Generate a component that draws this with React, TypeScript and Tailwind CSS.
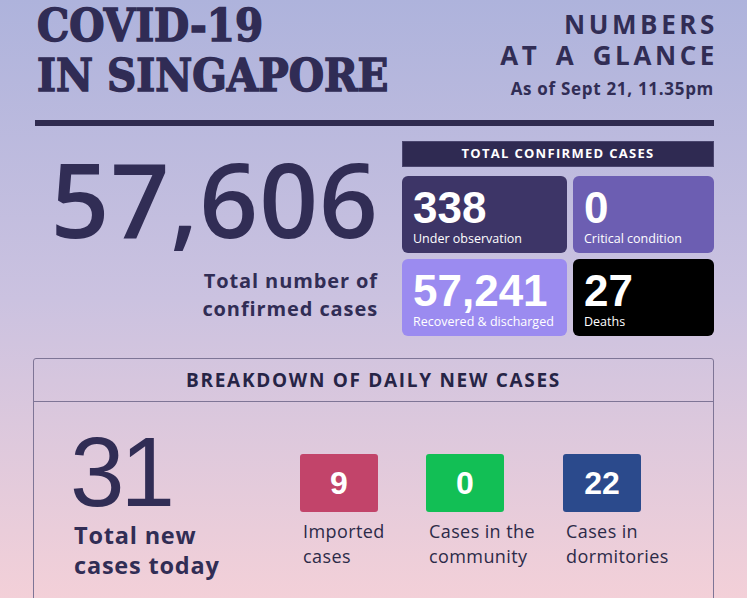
const sans = "font-['Open_Sans','Liberation_Sans',sans-serif]";
const arial = "font-['Liberation_Sans',Arial,sans-serif]";

type Stat = { value: string; label: string; bg: string };

const totals: Stat[] = [
  { value: "338", label: "Under observation", bg: "bg-[#3d3567]" },
  { value: "0", label: "Critical condition", bg: "bg-[#6c5eb2]" },
  { value: "57,241", label: "Recovered & discharged", bg: "bg-[#9b8bf0]" },
  { value: "27", label: "Deaths", bg: "bg-black" },
];

const daily = [
  { value: "9", lines: ["Imported", "cases"], bg: "bg-[#c2446a]", w: "w-[126px]" },
  { value: "0", lines: ["Cases in the", "community"], bg: "bg-[#12bf55]", w: "w-[137px]" },
  { value: "22", lines: ["Cases in", "dormitories"], bg: "bg-[#2b4a8c]", w: "w-[130px]" },
];

export default function App() {
  return (
    <div className="w-[747px] h-[598px] overflow-hidden bg-gradient-to-b from-[#aeb3dc] via-[#cbc2e0] to-[#f3d0d8] pl-[35px] pr-[33px] text-[#312d55]">
      {/* header */}
      <div className="flex justify-between items-start">
        <h1 className="font-['DejaVu_Serif_Condensed','DejaVu_Serif',serif] font-bold text-[45px] leading-[50px] pt-[1px] pl-[2px] text-[#302c55] [-webkit-text-stroke:1.4px_#302c55]">
          COVID-19
          <br />
          IN SINGAPORE
        </h1>
        <div className={`${sans} text-right font-bold pt-[9px]`}>
          <p className="text-[26px] leading-[31px] tracking-[3.6px] [word-spacing:5px] -mr-[4px]">NUMBERS</p>
          <p className="text-[26px] leading-[31px] tracking-[3.6px] [word-spacing:5px] -mr-[4px]">AT A GLANCE</p>
          <p className="text-[17px] leading-[20px] tracking-[0.7px] mt-[8px]">As of Sept 21, 11.35pm</p>
        </div>
      </div>

      <div className="h-[6px] bg-[#2f2b50] mt-[19px]" />

      {/* totals */}
      <div className="flex mt-[15px]">
        <div className="w-[343px] text-right">
          <p className={`${sans} font-semibold text-[103px] leading-none tracking-[1px] -mr-[1px] mt-[6px]`}>
            57,606
          </p>
          <p className={`${sans} font-bold text-[20px] leading-[28px] tracking-[0.9px] mt-[17px]`}>
            Total number of
            <br />
            confirmed cases
          </p>
        </div>
        <div className="w-[312px] ml-auto">
          <div
            className={`${sans} h-[26px] bg-[#2f2a52] border border-[#4a456e] text-white text-[13px] font-bold tracking-[1.3px] flex items-center justify-center`}
          >
            TOTAL CONFIRMED CASES
          </div>
          <div className="grid grid-cols-[165px_141px] gap-[6px] mt-[9px]">
            {totals.map((s) => (
              <div key={s.label} className={`${s.bg} h-[77px] rounded-[6px] px-[11px] pt-[12px] text-white`}>
                <p className={`${arial} font-bold text-[44px] leading-[40px]`}>{s.value}</p>
                <p className={`${sans} text-[12.5px] leading-[16px] whitespace-nowrap mt-[3px]`}>{s.label}</p>
              </div>
            ))}
          </div>
        </div>
      </div>

      {/* daily breakdown */}
      <div className="-ml-[2px] mt-[22px] border border-[#7e7596] rounded-[3px] h-[260px]">
        <div className="h-[43px] border-b border-[#7e7596] flex items-center justify-center">
          <p className={`${sans} font-bold text-[19px] tracking-[1.7px] text-[#262446]`}>
            BREAKDOWN OF DAILY NEW CASES
          </p>
        </div>
        <div className="flex pl-[40px] pt-[25px]">
          <div className="w-[226px]">
            <p className={`${arial} text-[98px] leading-[90px] tracking-[-4px] -ml-[4px]`}>31</p>
            <p className={`${sans} font-bold text-[23.5px] leading-[30px] tracking-[0.8px] mt-[3px]`}>
              Total new
              <br />
              cases today
            </p>
          </div>
          <div className="flex pt-[27px]">
            {daily.map((d) => (
              <div key={d.value + d.lines[0]} className={d.w}>
                <div
                  className={`${d.bg} w-[78px] h-[58px] rounded-[3px] flex items-center justify-center text-white ${arial} font-bold text-[32px]`}
                >
                  {d.value}
                </div>
                <p className={`${sans} text-[18px] leading-[25px] tracking-[0.4px] pl-[3px] mt-[7px] text-[#2c2a48]`}>
                  {d.lines[0]}
                  <br />
                  {d.lines[1]}
                </p>
              </div>
            ))}
          </div>
        </div>
      </div>
    </div>
  );
}
